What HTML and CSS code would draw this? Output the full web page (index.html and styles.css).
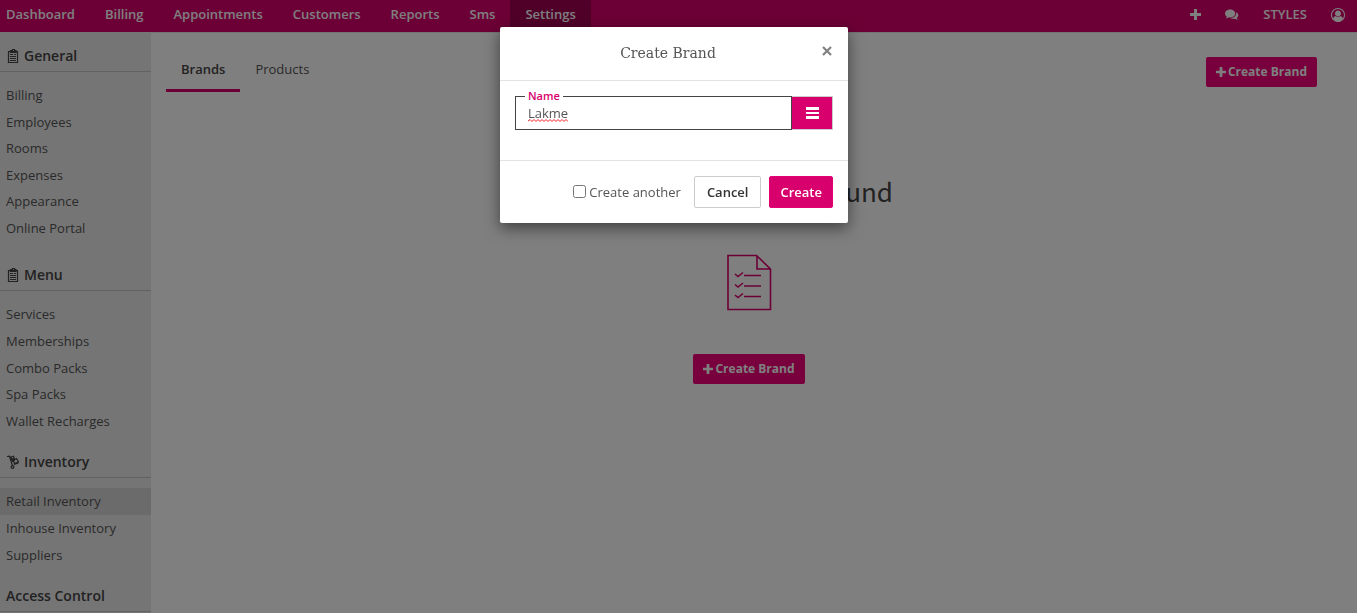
FILE: index.html
```html
<!DOCTYPE html>
<html lang="en">
<head>
<meta charset="utf-8">
<title>Brands</title>
<link rel="stylesheet" href="styles.css">
</head>
<body>
<div class="app">
  <header class="topbar">
    <nav class="menu">
      <a href="#">Dashboard</a><a href="#">Billing</a><a href="#">Appointments</a><a href="#">Customers</a><a href="#">Reports</a><a href="#">Sms</a><a href="#" class="active">Settings</a>
    </nav>
    <nav class="menu tools">
      <a href="#" aria-label="Add"><svg width="11" height="11" viewBox="0 0 11 11"><path d="M4 0h3v4h4v3H7v4H4V7H0V4h4z"/></svg></a>
      <a href="#" aria-label="Messages"><svg width="14" height="12" viewBox="0 0 15 12"><path d="M5.500 0C8.600 0 11 1.900 11 4.300S8.600 8.600 5.500 8.600c-.5 0-1-.1-1.400-.2C3.200 9.100 2.100 9.600.8 9.700c.6-.6 1-1.200 1.200-2C.8 6.900 0 5.700 0 4.300 0 1.900 2.400 0 5.500 0z"/><path d="M12 3c1.300.7 2.300 1.900 2.300 3.300 0 1.200-.7 2.200-1.800 3 .2.800.7 1.400 1.400 2-1.400-.1-2.500-.6-3.400-1.300-1.900.4-3.700.1-5-.7C9 9.400 12 7 12 4.300z"/></svg></a>
      <a href="#">STYLES</a>
      <a href="#" aria-label="Account"><svg width="14" height="14" viewBox="0 0 1792 1792"><path d="M896 0q182 0 348 71t286 191 191 286 71 348q0 181-70.500 347t-190.500 286-286 191.500-349 71.500-349-71-285.500-191.500-190.500-286-71-347.500 71-348 191-286 286-191 348-71zm619 1351q149-205 149-455 0-156-61-298t-164-245-245-164-298-61-298 61-245 164-164 245-61 298q0 250 149 455 66-327 306-327 131 128 313 128t313-128q240 0 306 327zm-235-647q0-159-112.500-271.500t-271.500-112.500-271.500 112.500-112.500 271.500 112.500 271.500 271.500 112.500 271.500-112.500 112.500-271.500z"/></svg></a>
    </nav>
  </header>
  <div class="columns">
    <aside class="sidebar">
      <section>
        <h2><svg width="14" height="14" viewBox="0 0 14 14"><path class="line" d="M4 2.500H2.500v11h9v-11H10M4.500 3.500v-2h2v-1h2v1h1.500v2z"/><path d="M4 2h6v2H4zM4 5h3v1H4zm4 0h2v1H8zM4 7h6v1H4zm0 2h6v1H4zm0 2h6v1H4z"/></svg>General</h2>
        <ul><li><a href="#">Billing</a></li><li><a href="#">Employees</a></li><li><a href="#">Rooms</a></li><li><a href="#">Expenses</a></li><li><a href="#">Appearance</a></li><li><a href="#">Online Portal</a></li></ul>
      </section>
      <section class="spaced">
        <h2><svg width="14" height="14" viewBox="0 0 14 14"><path class="line" d="M4 2.500H2.500v11h9v-11H10M4.500 3.500v-2h2v-1h2v1h1.500v2z"/><path d="M4 2h6v2H4zM4 5h3v1H4zm4 0h2v1H8zM4 7h6v1H4zm0 2h6v1H4zm0 2h6v1H4z"/></svg>Menu</h2>
        <ul><li><a href="#">Services</a></li><li><a href="#">Memberships</a></li><li><a href="#">Combo Packs</a></li><li><a href="#">Spa Packs</a></li><li><a href="#">Wallet Recharges</a></li></ul>
      </section>
      <section>
        <h2><svg width="14" height="14" viewBox="0 0 14 14"><path class="line" d="M1 1.500l2.500-.3 3 9.500M8 9.500l4.500-1.500M5 2l2.500-.8.800 2.500-2.500.8zM7 5.500l3.500-2 2 3.500-4 1.500z"/><path d="M5 4l3-1 1 3-3 1z"/><circle class="line" cx="6.500" cy="12" r="1.400"/></svg>Inventory</h2>
        <ul><li class="current"><a href="#">Retail Inventory</a></li><li><a href="#">Inhouse Inventory</a></li><li><a href="#">Suppliers</a></li></ul>
      </section>
      <section>
        <h2>Access Control</h2>
      </section>
    </aside>
    <main class="content">
      <div class="tabrow">
        <nav class="tabs"><a href="#" class="selected">Brands</a><a href="#">Products</a></nav>
        <button class="add" type="button"><svg width="10" height="10" viewBox="0 0 11 11"><path d="M4 0h3v4h4v3H7v4H4V7H0V4h4z"/></svg>Create Brand</button>
      </div>
      <div class="empty">
        <h1>There is no brand found</h1>
        <svg class="sheet" width="46" height="57" viewBox="0 0 46 57"><path d="M2 1.500h28.500l14 13.500v40.500H2zM31 1.500V15h13.500"/><path d="M9 20l3 2.500 5-4M9 30.500l3 2.500 5-4M9 41l3 2.500 5-4M18 21.500h17M18 32h17M18 42.500h17"/></svg>
        <button class="add" type="button"><svg width="10" height="10" viewBox="0 0 11 11"><path d="M4 0h3v4h4v3H7v4H4V7H0V4h4z"/></svg>Create Brand</button>
      </div>
    </main>
  </div>
  <div class="backdrop"></div>
</div>
<div class="overlay">
  <form class="dialog" role="dialog" aria-labelledby="dialog-title">
    <div class="dialog-head">
      <h3 id="dialog-title">Create Brand</h3>
      <button class="close" type="button" aria-label="Close"><svg width="10" height="10" viewBox="0 0 10 10"><path d="M1 1l8 8M9 1L1 9" stroke="currentColor" stroke-width="2.200"/></svg></button>
    </div>
    <div class="dialog-body">
      <div class="field">
        <label for="name">Name</label>
        <input id="name" type="text" value="Lakme" size="10">
        <svg class="spelling" width="40" height="3" viewBox="0 0 40 3"><path fill="none" stroke="#ee2222" d="M0 2l2-1.500 2 2 2-2 2 2 2-2 2 2 2-2 2 2 2-2 2 2 2-2 2 2 2-2 2 2 2-2 2 2 2-2 2 2 2-2 2 2"/></svg>
        <button type="button" aria-label="List"><svg width="13" height="12" viewBox="0 0 13 12"><path d="M0 0h13v3H0zM0 5h13v2H0zM0 9h13v3H0z"/></svg></button>
      </div>
    </div>
    <div class="dialog-foot">
      <label class="another"><input type="checkbox">Create another</label>
      <button class="cancel" type="button">Cancel</button>
      <button class="create" type="submit">Create</button>
    </div>
  </form>
</div>
</body>
</html>
```
FILE: styles.css
```css
* { box-sizing: border-box; }
body { margin: 0; background: #fff; color: #555; font: 13px/1.43 "Open Sans", sans-serif; overflow: hidden; }
a { color: inherit; text-decoration: none; }
button, input { font: inherit; }
svg { fill: currentColor; flex: none; }
h1, h2, h3, ul { margin: 0; padding: 0; font-weight: 400; list-style: none; }

.app { position: relative; margin-right: 4px; height: 100vh; overflow: hidden; display: flex; flex-direction: column; }
.backdrop { position: absolute; inset: 0; background: rgba(0, 0, 0, .5); }

.topbar { display: flex; justify-content: space-between; height: 32px; flex: none; background: #d8006c; color: #fff; font-weight: 600; }
.menu { display: flex; }
.menu a { display: flex; align-items: center; padding: 0 15px 3px; }
.menu a:first-child { padding-left: 6px; }
.menu a.active { background: #a00050; }
.tools a, .tools a:last-child { padding-right: 12px; padding-left: 12px; }

.columns { display: flex; flex: 1; min-height: 0; }
.sidebar { width: 151px; flex: none; background: #eaeaea; padding-top: 14px; overflow: hidden; }
.sidebar section { margin-bottom: 18px; }
.sidebar section.spaced { margin-top: 24px; }
.sidebar h2 { display: flex; align-items: center; gap: 4px; margin-bottom: 10px; padding: 0 6px 5px; border-bottom: 1px solid #c4c4c4; color: #444; font-size: 14px; line-height: 20px; font-weight: 600; }
.sidebar .line { fill: none; stroke: currentColor; stroke-width: 1.2; }
.sidebar a { display: block; padding: 4px 6px; }
.sidebar .current { background: #d6d6d6; }

.content { flex: 1; padding: 0 25px 0 15px; border-top: 1px solid #e8e8e8; }
.tabrow { display: flex; justify-content: space-between; align-items: flex-start; padding: 14px 15px 0 0; }
.tabs { display: flex; }
.tabs a { height: 45px; padding: 13px 15px 0; border-bottom: 3px solid transparent; }
.tabs .selected { border-color: #d8006c; color: #444; font-weight: 600; }
.add { display: flex; align-items: center; gap: 2px; height: 30px; padding: 0 10px; border: 0; border-radius: 2px; background: #f0007a; color: #fff; font-size: 12px; font-weight: 700; }
.tabrow .add { margin-top: 10px; }
.empty { display: flex; flex-direction: column; align-items: center; padding-top: 79px; }
.empty h1 { color: #444; font: 400 26px/40px "Noto Sans CJK SC", sans-serif; }
.sheet { margin: 43px 0; color: #d8006c; fill: none; stroke: currentColor; stroke-width: 1.6; }

.overlay { position: fixed; inset: 0; display: flex; justify-content: center; align-items: flex-start; padding: 27px 13px 0 0; }
.dialog { width: 348px; background: #fff; border-radius: 2px; box-shadow: 0 5px 15px rgba(0, 0, 0, .5); }
.dialog-head { position: relative; padding: 15px 27px 15px 15px; border-bottom: 1px solid #e3e3e3; text-align: center; }
.dialog-head h3 { font: 400 14px/23px "Roboto Slab", "DejaVu Serif", serif; }
.close { position: absolute; top: 19px; right: 16px; display: flex; padding: 0; border: 0; background: none; color: #808080; }
.dialog-body { padding: 15px 15px 30px; }
.field { position: relative; display: flex; height: 34px; }
.field label { position: absolute; top: -8px; left: 10px; padding: 0 3px; background: #fff; color: #d8006c; font-size: 11px; line-height: 16px; font-weight: 600; }
.field input { flex: 1; min-width: 0; padding: 0 12px; border: 1px solid #444; border-radius: 0; background: #fff; color: #555; outline: 0; }
.spelling { position: absolute; top: 23px; left: 13px; }
.field button { display: flex; align-items: center; justify-content: center; width: 41px; padding: 0; border: 1px solid #ccc; border-left: 0; background: #d8006c; color: #fff; }
.dialog-foot { display: flex; justify-content: flex-end; align-items: center; padding: 15px; border-top: 1px solid #e3e3e3; }
.another { display: flex; align-items: center; gap: 3px; margin-right: 13px; }
.another input { width: 13px; height: 13px; margin: 0; }
.dialog-foot button { height: 32px; border-radius: 2px; font-weight: 600; }
.cancel { margin-right: 8px; padding: 0 12px; border: 1px solid #ccc; background: #fff; color: #333; }
.create { padding: 0 10px; border: 1px solid #e60073; background: #d8006c; color: #fff; }
```
